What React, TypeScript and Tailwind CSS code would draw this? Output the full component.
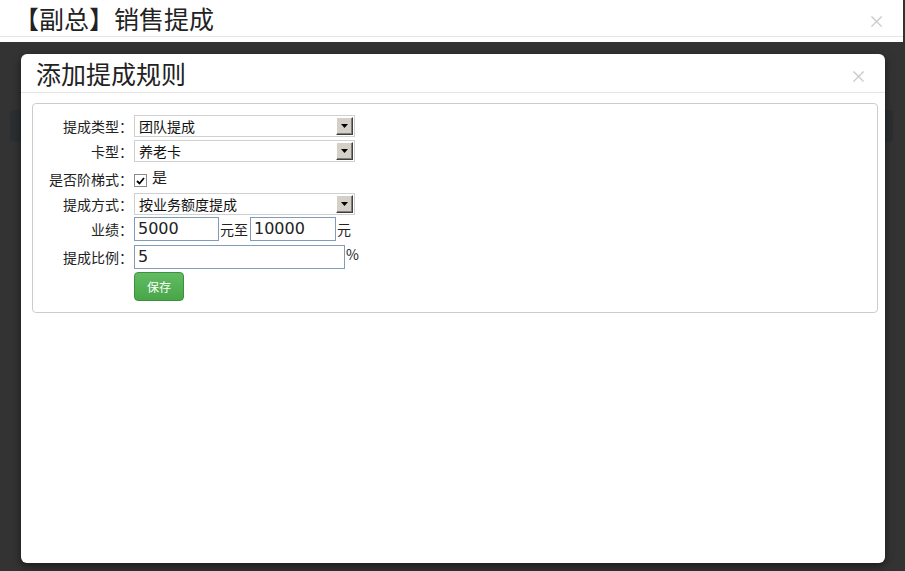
import React from 'react';

const font = { fontFamily: '"Noto Sans CJK SC", "Liberation Sans", sans-serif' };
const digitFont = { fontFamily: '"DejaVu Sans", "Noto Sans CJK SC", sans-serif' };

const Select: React.FC<{ value: string }> = ({ value }) => (
  <div className="flex h-[22px] w-[221px] items-center border border-[#d0d0d0] bg-white pl-[4px] pr-[1px]">
    <span className="flex-1 text-[14px] leading-none text-[#111]">{value}</span>
    <div className="flex h-[18px] w-[17px] items-center justify-center border-t border-l border-t-white border-l-white border-r border-b border-r-[#404040] border-b-[#404040] bg-[#d4d0c8] shadow-[inset_-1px_-1px_0_#808080]">
      <svg width="7" height="4" viewBox="0 0 7 4">
        <path d="M0 0h7L3.5 4z" fill="#000" />
      </svg>
    </div>
  </div>
);

const Row: React.FC<{ label: string; className?: string; children: React.ReactNode }> = ({ label, className, children }) => (
  <div className={`flex items-center ${className ?? ''}`}>
    <div className="w-[101px] shrink-0 pr-[1px] text-right text-[14px] leading-none text-[#222]">{label}</div>
    {children}
  </div>
);

export default function App() {
  return (
    <div className="relative h-[571px] w-[905px] overflow-hidden bg-[#333333]" style={font}>
      {/* outer modal header */}
      <div className="h-[42px] w-[903px] bg-white">
        <div className="flex h-[37px] items-center justify-between border-b border-[#e5e5e5] pl-[14px] pr-[18px]">
          <span className="text-[25px] leading-none text-[#222]">【副总】销售提成</span>
          <span className="mt-[4px] text-[17px] leading-none text-[#c8c8c8]">×</span>
        </div>
      </div>

      {/* faded content behind backdrop */}
      <div className="absolute left-[10px] right-[12px] top-[110px] h-[32px] rounded-[4px] bg-[#2c2f31]" />

      {/* inner modal */}
      <div className="absolute left-[21px] top-[54px] h-[509px] w-[864px] rounded-[6px] bg-white shadow-[0_3px_9px_rgba(0,0,0,0.5)]">
        <div className="flex h-[39px] items-center justify-between border-b border-[#e5e5e5] pl-[15px] pr-[18px]">
          <span className="text-[25px] leading-none text-[#222]">添加提成规则</span>
          <span className="mt-[4px] text-[17px] leading-none text-[#c8c8c8]">×</span>
        </div>

        <div className="pl-[11px] pr-[7px] pt-[10px]">
          <div className="h-[210px] rounded-[4px] border border-[#cccccc] pt-[11px]">
            <Row label="提成类型：">
              <Select value="团队提成" />
            </Row>
            <Row label="卡型：" className="mt-[3px]">
              <Select value="养老卡" />
            </Row>
            <Row label="是否阶梯式：" className="mt-[3px] h-[28px]">
              <div className="mt-[3px] flex h-[13px] w-[13px] items-center justify-center border border-[#8a8a8a] bg-white">
                <svg width="9" height="8" viewBox="0 0 9 8">
                  <path d="M1 4l2.5 2.5L8 1" stroke="#000" strokeWidth="1.8" fill="none" />
                </svg>
              </div>
              <span className="mb-[5px] ml-[5px] text-[15px] leading-none text-[#222]">是</span>
            </Row>
            <Row label="提成方式：">
              <Select value="按业务额度提成" />
            </Row>
            <Row label="业绩：" className="mt-[2px]">
              <input
                readOnly
                value="5000"
                className="h-[24px] w-[85px] border border-[#7f9db9] px-[3px] text-[16px] text-[#222] outline-none"
                style={digitFont}
              />
              <span className="ml-[1px] text-[14px] text-[#222]">元至</span>
              <input
                readOnly
                value="10000"
                className="ml-[2px] h-[24px] w-[86px] border border-[#7f9db9] px-[3px] text-[16px] text-[#222] outline-none"
                style={digitFont}
              />
              <span className="ml-[1px] text-[14px] text-[#222]">元</span>
            </Row>
            <Row label="提成比例：" className="mt-[3px]">
              <input
                readOnly
                value="5"
                className="h-[24px] w-[211px] border border-[#7f9db9] px-[3px] text-[16px] text-[#222] outline-none"
                style={digitFont}
              />
              <span className="mb-[5px] ml-[1px] text-[14px] text-[#222]">%</span>
            </Row>
            <div className="mt-[2px] pl-[101px]">
              <button
                className="h-[29px] w-[50px] rounded-[4px] border border-[#3e8f3e] bg-gradient-to-b from-[#62bd62] to-[#48a548] text-[12px] text-white"
                style={font}
              >
                保存
              </button>
            </div>
          </div>
        </div>
      </div>
    </div>
  );
}
